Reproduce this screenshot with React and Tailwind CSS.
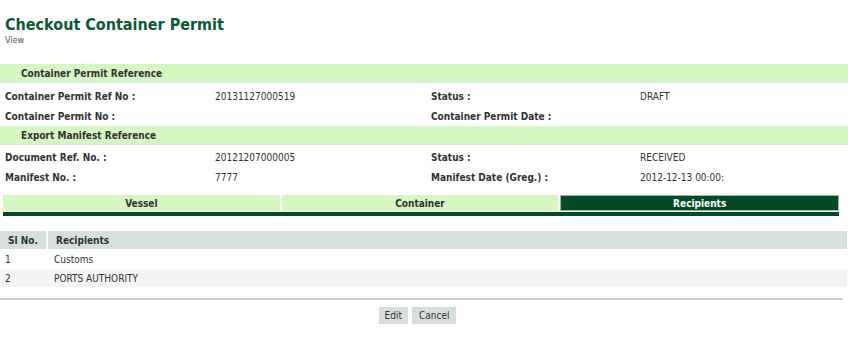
export default function App() {
  const font = { fontFamily: '"DejaVu Sans Condensed", "DejaVu Sans", Verdana, sans-serif' };
  const Row = ({ a, b, c, d }) => (
    <div className="grid grid-cols-4 h-[20px] items-center text-[10px] text-[#333]">
      <div className="pl-[5px] font-bold">{a}</div>
      <div className="pl-[3px]">{b}</div>
      <div className="pl-[7px] font-bold">{c}</div>
      <div className="pl-[4px]">{d}</div>
    </div>
  );
  const Band = ({ children }) => (
    <div className="h-[19px] bg-[#d6f6c2] flex items-center pl-[21px] text-[10px] font-bold text-[#333] border-b border-[#dfe6e8]">
      {children}
    </div>
  );
  return (
    <div className="w-[848px] h-[342px] bg-white" style={font}>
      <div className="pt-[15px] pl-[5px]">
        <div className="text-[16px] leading-[20px] font-bold text-[#0b5a34]">Checkout Container Permit</div>
        <div className="text-[9px] leading-[10px] text-[#555]">View</div>
      </div>
      <div className="mt-[19px]">
        <Band>Container Permit Reference</Band>
        <div className="pt-[3px]">
          <Row a="Container Permit Ref No :" b="20131127000519" c="Status :" d="DRAFT" />
          <Row a="Container Permit No :" b="" c="Container Permit Date :" d="" />
        </div>
        <Band>Export Manifest Reference</Band>
        <div className="pt-[2px]">
          <Row a="Document Ref. No. :" b="20121207000005" c="Status :" d="RECEIVED" />
          <Row a="Manifest No. :" b="7777" c="Manifest Date (Greg.) :" d="2012-12-13 00:00:" />
        </div>
      </div>
      <div className="mt-[8px] ml-[3px] w-[836px]">
        <div className="flex gap-[2px] h-[16px] text-[10px] font-bold">
          <div className="flex-1 bg-[#d6f6c2] flex items-center justify-center text-[#333]">Vessel</div>
          <div className="flex-1 bg-[#d6f6c2] flex items-center justify-center text-[#333]">Container</div>
          <div className="flex-1 bg-[#034b27] border border-[#9fb3a6] flex items-center justify-center text-white">Recipients</div>
        </div>
        <div className="mt-[1px] h-[4px] bg-[#034b27]"></div>
      </div>
      <div className="mt-[15px] w-[847px] text-[10px] text-[#333]">
        <div className="flex h-[18px] bg-[#d6dfdc] font-bold items-center">
          <div className="w-[48px] pl-[8px] h-full flex items-center border-r-2 border-white">Sl No.</div>
          <div className="pl-[8px]">Recipients</div>
        </div>
        <div className="flex h-[20px] items-center">
          <div className="w-[48px] pl-[5px]">1</div>
          <div className="pl-[6px]">Customs</div>
        </div>
        <div className="flex h-[18px] items-center bg-[#f4f4f4]">
          <div className="w-[48px] pl-[5px]">2</div>
          <div className="pl-[6px]">PORTS AUTHORITY</div>
        </div>
      </div>
      <div className="mt-[11px] w-[843px] h-[2px] bg-[#c8ccca]"></div>
      <div className="mt-[7px] flex justify-center gap-[4px] pr-[13px] text-[10px] text-[#333]">
        <div className="h-[17px] px-[6px] bg-[#d6dfdc] flex items-center">Edit</div>
        <div className="h-[17px] px-[7px] bg-[#d6dfdc] flex items-center">Cancel</div>
      </div>
    </div>
  );
}
